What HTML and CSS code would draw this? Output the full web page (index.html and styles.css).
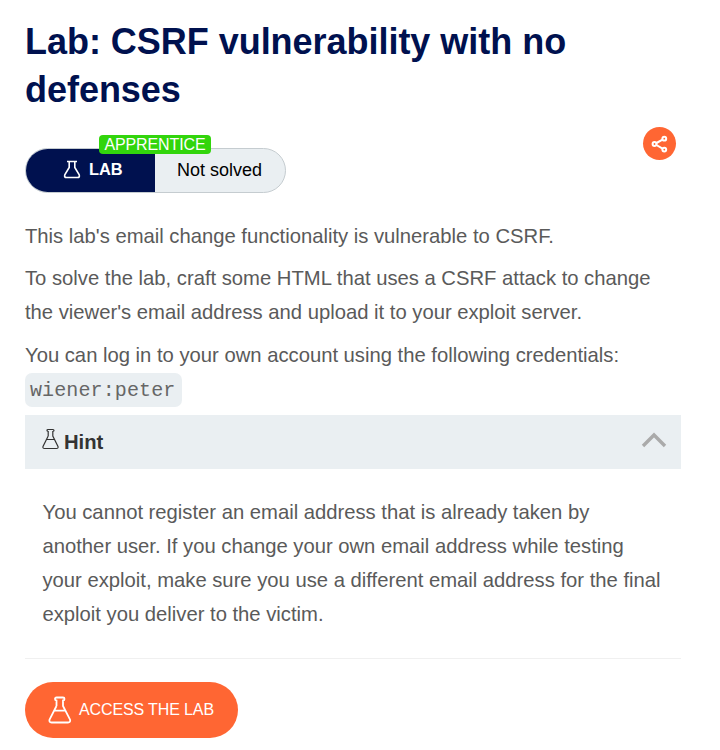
FILE: index.html
```html
<!DOCTYPE html>
<html lang="en">
<head>
<meta charset="utf-8">
<title>Lab: CSRF vulnerability with no defenses</title>
<link rel="stylesheet" href="styles.css">
</head>
<body>
<main>
  <h1>Lab: CSRF vulnerability with no defenses</h1>
  <div class="status-row">
    <div class="status">
      <span class="level">APPRENTICE</span>
      <div class="status-lab">
        <svg class="flask-small" viewBox="0 0 18 20"><path d="M4 1.500h10M6.200 2v5.500L1.900 14.500Q.8 17.500 3.500 17.500h11Q17.200 17.500 16.100 14.500L11.800 7.500V2"/></svg>
        <span>LAB</span>
      </div>
      <div class="status-text">Not solved</div>
    </div>
    <button class="share" aria-label="Share">
      <svg viewBox="0 0 33 33"><path d="M19.500 12.700 13.500 16M13.500 18l6 3.600"/><circle cx="21.300" cy="11.700" r="1.900"/><circle cx="11.500" cy="17" r="1.900"/><circle cx="21.300" cy="22.600" r="1.900"/></svg>
    </button>
  </div>
  <p class="intro">This lab's email change functionality is vulnerable to CSRF.</p>
  <p class="task">To solve the lab, craft some HTML that uses a CSRF attack to change<br>the viewer's email address and upload it to your exploit server.</p>
  <p class="login">You can log in to your own account using the following credentials:<br><code>wiener:peter</code></p>
  <section class="hint">
    <header class="hint-head">
      <svg class="flask-hint" viewBox="0 0 17 22"><path d="M6.200 8V3.500Q5 3.300 5 2.500q0-1 1-1h5q1 0 1 1 0 .8-1.200 1V8L16 18.500Q16.500 20.500 14.500 20.500h-12Q.5 20.500 1 18.500L6.200 8M4.200 11.500h8.600"/></svg>
      <h2>Hint</h2>
      <svg class="chevron" viewBox="0 0 26 16"><path d="M2 14 13 3l11 11"/></svg>
    </header>
    <p class="hint-body">You cannot register an email address that is already taken by<br>another user. If you change your own email address while testing<br>your exploit, make sure you use a different email address for the final<br>exploit you deliver to the victim.</p>
  </section>
  <a class="access"><svg class="flask-large" viewBox="0 0 24 28"><path d="M8.500 10V4.500Q7 4.300 7 3q0-1.500 1.500-1.500h6.500q1.500 0 1.500 1.500 0 1.300-1.500 1.500V10L22.100 23.700Q22.700 26.500 20 26.500H3.500Q.9 26.500 1.500 23.700L8.500 10M5.800 14.700h11.900"/></svg><span>ACCESS THE LAB</span></a>
</main>
</body>
</html>
```
FILE: styles.css
```css
* { box-sizing: border-box; }
body { margin: 0; background: #fff; color: #5a5a5a; font: 20.25px/34px "Liberation Sans", Arial, sans-serif; }
main { width: 656px; margin-left: 25px; padding-top: 18px; }
h1 { margin: 0; color: #00114f; font-size: 36px; letter-spacing: -.03px; line-height: 48px; }
svg { fill: none; stroke: currentColor; flex: none; }
p { margin: 0; white-space: nowrap; letter-spacing: -.01px; }
.status-row { display: flex; justify-content: space-between; margin-top: 13px; height: 66px; }
.status { position: relative; display: flex; width: 261px; height: 45px; margin-top: 21px; border: 1px solid #c5ccd0; border-radius: 23px; background: #eaeff2; }
.status-lab { display: flex; align-items: center; width: 129px; padding-left: 37px; gap: 8px; border-radius: 22px 0 0 22px; background: #00114f; color: #fff; font-size: 16.4px; font-weight: 700; line-height: 41px; padding-bottom: 2px; }
.status-text { padding-left: 22px; color: #000; font-size: 18px; line-height: 42px; }
.level { position: absolute; left: 73px; top: -14px; width: 112px; height: 19px; border-radius: 4px; background: #32d50c; color: #fff; font-size: 16px; letter-spacing: -.1px; line-height: 19px; text-align: center; }
.flask-small { width: 18px; height: 20px; stroke-width: 1.6; }
.share { width: 33px; height: 33px; margin: 0 5px 0 0; padding: 0; border: 0; border-radius: 50%; background: #ff6633; color: #fff; }
.share svg { display: block; width: 33px; height: 33px; stroke-width: 2; }
.intro { margin-top: 26px; }
.task { margin-top: 8px; }
.login { margin-top: 9px; height: 68px; }
code { display: inline-block; width: 157px; height: 34px; margin-top: 1px; padding: 0 5px; border-radius: 7px; background: #eaeff2; color: #666; font: 20px/35px "Liberation Mono", monospace; letter-spacing: .12px; vertical-align: top; }
.hint { margin-top: 9px; border-bottom: 1px solid #f0f0f0; height: 244px; }
.hint-head { display: flex; align-items: center; height: 54px; padding: 0 14px 0 17px; background: #eaeff2; color: #333; }
.hint h2 { margin: 0 auto 0 5px; font-size: 20.25px; }
.flask-hint { width: 17px; height: 22px; margin-top: -6px; stroke-width: 1.2; }
.chevron { width: 26px; height: 16px; margin-top: -4px; color: #aaa; stroke-width: 3.4; }
.hint-body { padding: 26px 17px 0 17.5px; }
.access { display: flex; align-items: center; width: 213px; height: 56px; margin-top: 23px; padding-left: 23px; gap: 7px; border-radius: 28px; background: #ff6633; color: #fff; font-size: 16px; letter-spacing: -.12px; }
.flask-large { width: 24px; height: 28px; stroke-width: 1.8; }
```
